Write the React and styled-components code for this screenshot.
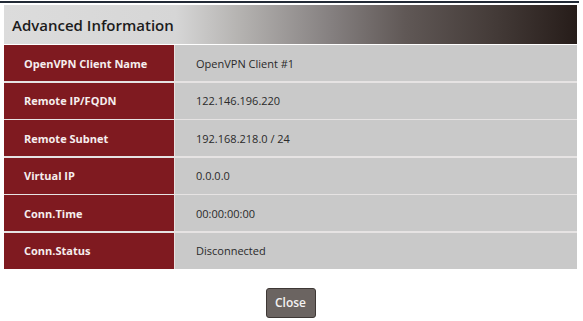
import React from "react"
import styled, { createGlobalStyle } from "styled-components"

const GlobalStyle = createGlobalStyle`
  html, body {
    margin: 0;
    padding: 0;
    background: #ffffff;
  }
  body {
    font-family: "Open Sans", "Noto Sans", sans-serif;
  }
`

const Page = styled.div`
  width: 583px;
  height: 321px;
  padding: 1px 6px 0 4px;
  box-sizing: border-box;
  background: #ffffff;
`

const TopRule = styled.div`
  height: 2px;
  margin: 0 -2px 0 -4px;
  background: #222a36;
`

const Panel = styled.div`
  margin-top: 2px;
  display: flex;
  flex-direction: column;
`

const Header = styled.div`
  height: 39px;
  display: flex;
  align-items: center;
  padding-left: 8px;
  margin-bottom: 1px;
  font-size: 15px;
  font-weight: 600;
  color: #1c1c1c;
  background: linear-gradient(
    to right,
    #dcdcdc 0%,
    #d6d6d6 30%,
    #b5b3b1 41%,
    #858080 57%,
    #605856 70%,
    #433a37 86%,
    #261c19 100%
  );
`

const Table = styled.div`
  display: grid;
  grid-template-columns: 171px 1fr;
  grid-auto-rows: 36px;
  row-gap: 1.5px;
  background: #e6e3e3;
`

const Label = styled.div`
  display: flex;
  align-items: center;
  padding-left: 20px;
  background: #7f1a20;
  color: #f6eeee;
  font-size: 11px;
  font-weight: 700;
  border-right: 1px solid #e8e0e0;
`

const Value = styled.div`
  display: flex;
  align-items: center;
  padding-left: 21px;
  background: #c9c9c9;
  color: #2a2a2a;
  font-size: 11px;
`

const Footer = styled.div`
  display: flex;
  justify-content: center;
  padding-top: 19px;
`

const Button = styled.button`
  width: 50px;
  height: 30px;
  padding: 0;
  border: 1px solid #3e3835;
  border-radius: 3px;
  background: #6b6461;
  color: #f4f2f2;
  font-family: "Open Sans", "Noto Sans", sans-serif;
  font-size: 12px;
  font-weight: 600;
  cursor: pointer;
`

const rows = [
  ["OpenVPN Client Name", "OpenVPN Client #1"],
  ["Remote IP/FQDN", "122.146.196.220"],
  ["Remote Subnet", "192.168.218.0 / 24"],
  ["Virtual IP", "0.0.0.0"],
  ["Conn.Time", "00:00:00:00"],
  ["Conn.Status", "Disconnected"],
]

export default function App() {
  return (
    <Page>
      <GlobalStyle />
      <TopRule />
      <Panel>
        <Header>Advanced Information</Header>
        <Table>
          {rows.map(([label, value]) => (
            <React.Fragment key={label}>
              <Label>{label}</Label>
              <Value>{value}</Value>
            </React.Fragment>
          ))}
        </Table>
      </Panel>
      <Footer>
        <Button>Close</Button>
      </Footer>
    </Page>
  )
}
